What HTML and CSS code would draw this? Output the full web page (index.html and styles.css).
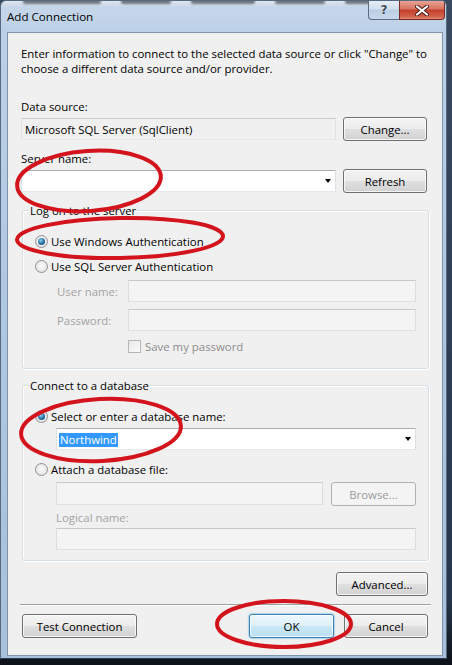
FILE: index.html
```html
<!DOCTYPE html>
<html lang="en">
<head>
<meta charset="utf-8">
<title>Add Connection</title>
<link rel="stylesheet" href="styles.css">
</head>
<body>
<div class="screen">
  <div class="window">
    <div class="titlebar">
      <div class="behind"><i class="b1"></i><i class="b2"></i><i class="b3"></i><i class="b4"></i><i class="b5"></i></div>
      <div class="title">Add Connection</div>
      <div class="caption-btns">
        <div class="cap help">?</div>
        <div class="cap close">
          <svg width="14" height="11" viewBox="0 0 14 11"><path d="M2 1.5 L12 9.5 M12 1.5 L2 9.5" stroke="#4a1a14" stroke-width="4" stroke-linecap="round"/><path d="M2 1.5 L12 9.5 M12 1.5 L2 9.5" stroke="#ffffff" stroke-width="2.2" stroke-linecap="round"/></svg>
        </div>
      </div>
    </div>
    <div class="client">
      <p class="intro">Enter information to connect to the selected data source or click "Change" to<br>choose a different data source and/or provider.</p>

      <div class="label lbl-ds">Data source:</div>
      <div class="row">
        <div class="field readonly">Microsoft SQL Server (SqlClient)</div>
        <button class="btn">Change...</button>
      </div>

      <div class="label lbl-sn">Server name:</div>
      <div class="row">
        <div class="field combo"><span class="combo-text"></span><i class="arrow"></i></div>
        <button class="btn">Refresh</button>
      </div>

      <div class="group g-logon">
        <div class="legend">Log on to the server</div>
        <div class="radio-row r1"><span class="radio checked"></span>Use Windows Authentication</div>
        <div class="radio-row r2"><span class="radio"></span>Use SQL Server Authentication</div>
        <div class="cred-grid">
          <span class="dim">User name:</span><div class="field disabled"></div>
          <span class="dim">Password:</span><div class="field disabled"></div>
          <span></span><div class="check-row"><span class="checkbox"></span><span class="dim2">Save my password</span></div>
        </div>
      </div>

      <div class="group g-db">
        <div class="legend">Connect to a database</div>
        <div class="radio-row r3"><span class="radio checked"></span>Select or enter a database name:</div>
        <div class="indent">
          <div class="field combo db-combo"><span class="combo-text"><span class="sel">Northwind</span></span><i class="arrow"></i></div>
        </div>
        <div class="radio-row r4"><span class="radio"></span>Attach a database file:</div>
        <div class="indent attach-row">
          <div class="field disabled attach-field"></div>
          <button class="btn btn-disabled browse">Browse...</button>
        </div>
        <div class="indent dim logical-lbl">Logical name:</div>
        <div class="indent">
          <div class="field disabled logical-field"></div>
        </div>
      </div>

      <button class="btn advanced">Advanced...</button>
      <div class="separator"></div>
      <div class="bottom-row">
        <button class="btn test">Test Connection</button>
        <button class="btn ok">OK</button>
        <button class="btn cancel">Cancel</button>
      </div>
    </div>
  </div>

  <svg class="marks" width="452" height="665" viewBox="0 0 452 665">
    <ellipse cx="89" cy="181" rx="72" ry="30" transform="rotate(-4 89 181)"/>
    <ellipse cx="120" cy="238" rx="103" ry="20" transform="rotate(-1 120 238)"/>
    <ellipse cx="101" cy="430" rx="80" ry="31" transform="rotate(-3 101 430)"/>
    <ellipse cx="284" cy="624" rx="67" ry="23"/>
  </svg>
</div>
</body>
</html>
```
FILE: styles.css
```css
* { box-sizing: border-box; }

html, body {
  margin: 0;
  padding: 0;
}

body {
  width: 452px;
  height: 665px;
  overflow: hidden;
  background: linear-gradient(180deg, #3a4a5e 0%, #26374b 90%, #0d1118 100%);
  font-family: "Open Sans", "Noto Sans", sans-serif;
  font-size: 11.4px;
  line-height: 15px;
  color: #000;
}

.screen {
  position: relative;
  width: 452px;
  height: 665px;
}

/* ---------- window frame ---------- */
.window {
  width: 447px;
  height: 659px;
  border: 1px solid #56697f;
  border-bottom-color: #2e3d50;
  border-radius: 6px 6px 0 0;
  background: linear-gradient(180deg, #dfe6ee 0px, #c6d6e9 6px, #bcd1e8 30px, #aec7e2 50%, #a7c0dc 100%);
  display: flex;
  flex-direction: column;
  overflow: hidden;
}

.titlebar {
  position: relative;
  height: 31px;
  display: flex;
  justify-content: space-between;
  align-items: flex-start;
  padding-left: 6px;
  flex: none;
}

.behind {
  position: absolute;
  left: 22px;
  top: -2px;
  display: flex;
  gap: 20px;
  filter: blur(1.3px);
  opacity: 0.6;
}

.behind i {
  display: block;
  height: 5px;
  background: #2a2f38;
  border-radius: 2px;
}
.behind .b1 { width: 78px; }
.behind .b2 { width: 50px; }
.behind .b3 { width: 64px; }
.behind .b4 { width: 50px; }
.behind .b5 { width: 26px; }

.title {
  margin-top: 8px;
  font-size: 11.6px;
  color: #000;
  position: relative;
}

.caption-btns {
  display: flex;
  margin-right: 1px;
  position: relative;
}

.cap {
  height: 19px;
  display: flex;
  align-items: center;
  justify-content: center;
  border: 1px solid #5d6d80;
  border-top: none;
}

.help {
  width: 31px;
  border-right: none;
  border-radius: 0 0 0 4px;
  background: linear-gradient(180deg, #e6edf5 0%, #d2dfee 45%, #b9cde3 50%, #c8d9ec 100%);
  font-family: "DejaVu Sans", sans-serif;
  font-size: 12px;
  font-weight: bold;
  color: #3c4b5d;
  text-shadow: 0 0 2px #fff;
}

.close {
  width: 46px;
  border-color: #7a2a22;
  border-radius: 0 0 4px 0;
  background: linear-gradient(180deg, #e8a494 0%, #d7715f 45%, #c2402c 50%, #d2604a 85%, #e08a6e 100%);
}

/* ---------- client area ---------- */
.client {
  flex: 1;
  margin: 0 3px 2px 6px;
  border: 1px solid #7f93ab;
  background: #f0f0f0;
  padding: 13px 14px 0 13px;
  display: flex;
  flex-direction: column;
}

.intro {
  margin: 0;
  white-space: nowrap;
}

.label {
  margin-top: 10px;
}
.lbl-ds { margin-top: 23px; }

.row {
  margin-top: 3px;
  display: flex;
  align-items: center;
  gap: 7px;
}

.row .field {
  width: 315px;
}
.row .btn {
  width: 84px;
}

/* ---------- fields ---------- */
.field {
  height: 22px;
  border: 1px solid #abadb3;
  border-left-color: #dde0e6;
  border-right-color: #dde0e6;
  border-bottom-color: #e3e9ef;
  background: #fff;
  padding: 0 3px;
  display: flex;
  align-items: center;
  white-space: nowrap;
}

.field.readonly {
  background: #f0f0f0;
  border-color: #c8cbd0;
  border-left-color: #e0e2e6;
  border-right-color: #e0e2e6;
  border-bottom-color: #e6e8ea;
}

.field.disabled {
  background: #f4f4f4;
  border-color: #c6c8cc;
  border-left-color: #dcdde0;
  border-right-color: #dcdde0;
  border-bottom-color: #dedfe2;
}

.combo {
  justify-content: space-between;
  padding: 0 4px 0 2px;
}

.arrow {
  width: 0;
  height: 0;
  border-left: 3.5px solid transparent;
  border-right: 3.5px solid transparent;
  border-top: 4px solid #000;
}

.sel {
  background: #3399ff;
  color: #fff;
  padding: 0 1px;
  display: inline-block;
  line-height: 14px;
}

/* ---------- buttons ---------- */
.btn {
  height: 24px;
  padding: 0;
  font: inherit;
  color: #000;
  border: 1px solid #707070;
  border-radius: 3px;
  background: linear-gradient(180deg, #f4f4f4 0%, #ececec 48%, #dfdfdf 52%, #d2d2d2 100%);
  box-shadow: inset 0 0 0 1px rgba(255, 255, 255, 0.75);
}

.btn-disabled {
  border-color: #adb2b5;
  background: #f4f4f4;
  color: #9a9a9a;
  box-shadow: none;
}

.advanced {
  margin-top: 11px;
  align-self: flex-end;
  width: 92px;
}

.separator {
  margin: 8px -3px 0 -1px;
  height: 2px;
  border-top: 1px solid #a0a0a0;
  border-bottom: 1px solid #ffffff;
}

.bottom-row {
  margin-top: 8px;
  display: flex;
  align-items: center;
}

.test {
  width: 115px;
  margin-left: 1px;
}

.ok {
  width: 85px;
  margin-left: auto;
  border-color: #3c7fb1;
  background: linear-gradient(180deg, #ecf7fd 0%, #dff1fb 48%, #c9e8f8 52%, #b9e0f5 100%);
  box-shadow: inset 0 0 0 1px rgba(255, 255, 255, 0.8), 0 0 1px 1px rgba(110, 190, 235, 0.5);
}

.cancel {
  width: 84px;
  margin-left: 10px;
}

/* ---------- group boxes ---------- */
.group {
  margin: 17px -1px 0 1px;
  border: 1px solid #d5dfe5;
  border-radius: 3px;
  box-shadow: inset 1px 1px 0 #ffffff, 1px 1px 0 #ffffff;
  padding: 0 12px 14px 12px;
}

.g-db {
  margin-top: 16px;
  padding-bottom: 10px;
}

.legend {
  width: fit-content;
  margin: -8px 0 0 -6px;
  padding: 0 1px;
  background: #f0f0f0;
  line-height: 15px;
}

.radio-row {
  display: flex;
  align-items: center;
  gap: 3px;
  height: 15px;
}

.r1 { margin-top: 16px; }
.r2 { margin-top: 10px; }
.r3 { margin-top: 16px; }
.r4 { margin-top: 12px; }

.radio {
  width: 13px;
  height: 13px;
  border-radius: 50%;
  border: 1px solid #8e9196;
  background: radial-gradient(circle at 50% 45%, #fbfbfb 0%, #e9e9e9 60%, #d4d4d4 100%);
  display: flex;
  align-items: center;
  justify-content: center;
  flex: none;
}

.radio.checked::after {
  content: "";
  width: 7px;
  height: 7px;
  border-radius: 50%;
  background: radial-gradient(circle at 40% 35%, #8fd0f0 0%, #2f7fb0 45%, #0f3e66 100%);
}

.cred-grid {
  margin-top: 6px;
  margin-left: 22px;
  display: grid;
  grid-template-columns: 71px 1fr;
  row-gap: 7px;
  align-items: center;
}

.dim { color: #a3a3a3; }
.dim2 { color: #8c8c8c; }

.check-row {
  margin-top: 1px;
  height: 15px;
  display: flex;
  align-items: center;
  gap: 4px;
}

.checkbox {
  width: 13px;
  height: 13px;
  border: 1px solid #b4b6b9;
  background: linear-gradient(135deg, #e8e8e8, #fafafa);
  flex: none;
}

.indent {
  margin-left: 21px;
}

.db-combo {
  margin-top: 4px;
  padding-left: 2px;
}

.attach-row {
  margin-top: 5px;
  display: flex;
  gap: 8px;
  align-items: flex-start;
}

.attach-field {
  flex: 1;
  height: 23px;
}

.browse {
  width: 85px;
}

.logical-lbl {
  margin-top: 4px;
}

.logical-field {
  margin-top: 3px;
}

/* ---------- annotation overlay ---------- */
.marks {
  position: absolute;
  left: 0;
  top: 0;
  pointer-events: none;
}

.marks ellipse {
  fill: none;
  stroke: #d3141c;
  stroke-width: 4;
}
```
